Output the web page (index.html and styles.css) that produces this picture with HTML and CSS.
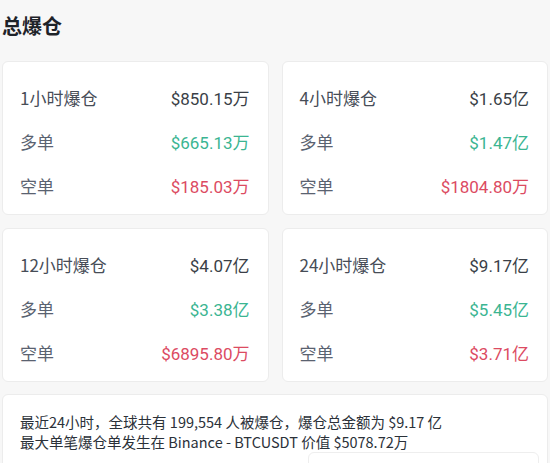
FILE: index.html
```html
<!DOCTYPE html>
<html lang="zh-CN">
<head>
<meta charset="utf-8">
<title>总爆仓</title>
<link rel="stylesheet" href="styles.css">
</head>
<body>
<main class="page">
  <h2 class="title">总爆仓</h2>
  <section class="grid">
    <div class="card">
      <div class="row"><span class="label main">1小时爆仓</span><span class="val">$850.15万</span></div>
      <div class="row"><span class="label">多单</span><span class="val up">$665.13万</span></div>
      <div class="row"><span class="label">空单</span><span class="val down">$185.03万</span></div>
    </div>
    <div class="card">
      <div class="row"><span class="label main">4小时爆仓</span><span class="val">$1.65亿</span></div>
      <div class="row"><span class="label">多单</span><span class="val up">$1.47亿</span></div>
      <div class="row"><span class="label">空单</span><span class="val down">$1804.80万</span></div>
    </div>
    <div class="card">
      <div class="row"><span class="label main">12小时爆仓</span><span class="val">$4.07亿</span></div>
      <div class="row"><span class="label">多单</span><span class="val up">$3.38亿</span></div>
      <div class="row"><span class="label">空单</span><span class="val down">$6895.80万</span></div>
    </div>
    <div class="card">
      <div class="row"><span class="label main">24小时爆仓</span><span class="val">$9.17亿</span></div>
      <div class="row"><span class="label">多单</span><span class="val up">$5.45亿</span></div>
      <div class="row"><span class="label">空单</span><span class="val down">$3.71亿</span></div>
    </div>
  </section>
  <section class="summary">
    <p class="line">最近24小时，全球共有 199,554 人被爆仓，爆仓总金额为 $9.17 亿</p>
    <p class="line">最大单笔爆仓单发生在 Binance - BTCUSDT 价值 $5078.72万</p>
    <div class="inner"></div>
  </section>
</main>
</body>
</html>
```

FILE: styles.css
```css
html, body {
  margin: 0;
  padding: 0;
  background: #f7f7f7;
  overflow: hidden;
}
body {
  font-family: "Roboto", "Noto Sans CJK SC", sans-serif;
  color: #1e2329;
}
.page {
  padding: 12px 2px 0 2px;
}
.title {
  margin: 0;
  font-family: "Noto Sans CJK SC", sans-serif;
  font-size: 20px;
  font-weight: 700;
  line-height: 28px;
  color: #1e2329;
}
.grid {
  margin-top: 21px;
  display: grid;
  grid-template-columns: 1fr 1fr;
  column-gap: 13px;
  row-gap: 13px;
}
.card {
  background: #ffffff;
  border: 1px solid #ececec;
  border-radius: 6px;
  padding: 13px 18px 7px 17px;
  height: 154px;
  box-sizing: border-box;
}
.row {
  display: flex;
  justify-content: space-between;
  align-items: center;
  height: 44px;
  font-size: 17px;
}
.label {
  color: #5a6270;
  font-family: "Noto Sans CJK SC", sans-serif;
}
.label.main {
  color: #474d57;
}
.val {
  color: #3a3f47;
  font-weight: 400;
}
.val.up {
  color: #3bb592;
}
.val.down {
  color: #dc4b62;
}
.summary {
  margin-top: 12px;
  background: #ffffff;
  border: 1px solid #ececec;
  border-radius: 6px;
  padding: 17px 8px 0 17px;
  height: 120px;
  box-sizing: border-box;
}
.line {
  margin: 0;
  font-family: "Noto Sans CJK SC", sans-serif;
  font-size: 14.5px;
  line-height: 20px;
  color: #2b3139;
}
.inner {
  margin: 0 0 0 288px;
  height: 40px;
  border: 1px solid #eeeeee;
  border-radius: 6px;
}
```
